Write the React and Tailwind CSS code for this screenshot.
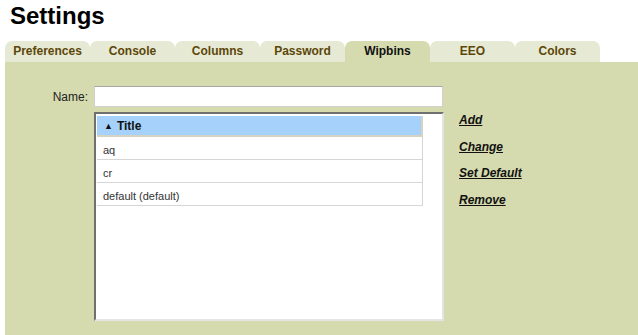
import React from "react";

const tabs = ["Preferences", "Console", "Columns", "Password", "Wipbins", "EEO", "Colors"];
const rows = ["aq", "cr", "default (default)"];
const links = ["Add", "Change", "Set Default", "Remove"];

export default function App() {
  return (
    <div className="w-[638px] h-[335px] overflow-hidden bg-white flex flex-col font-['Liberation_Sans',Arial,sans-serif]">
      <h1 className="pl-[10px] pt-[2px] text-[24px] leading-[28px] font-bold text-black">Settings</h1>
      <div className="mt-[11px] pl-[5px] flex">
        {tabs.map((t) => {
          const active = t === "Wipbins";
          return (
            <div
              key={t}
              className={
                active
                  ? "w-[85px] h-[21px] rounded-t-[7px] bg-[#d5dbae] text-[#111] text-[12px] leading-[21px] font-bold text-center"
                  : "w-[85px] h-[21px] rounded-t-[7px] bg-[#e6e9d4] text-[#5c4709] text-[12px] leading-[21px] font-bold text-center"
              }
            >
              {t}
            </div>
          );
        })}
      </div>
      <div className="ml-[5px] flex-1 bg-[#d5dbae] pt-[24px]">
        <div className="flex items-center gap-[6px]">
          <div className="w-[83px] text-right text-[12px] text-[#222]">Name:</div>
          <div className="w-[349px] h-[21px] bg-white border border-[#d0d0d0] border-t-[#a8a8a8]"></div>
        </div>
        <div className="mt-[5px] ml-[89px] flex gap-[15px]">
          <div className="w-[350px] h-[209px] bg-white border-2 border-[#e4e4e4] border-t-[#707070] border-l-[#707070] pt-[2px] pl-[1px]">
            <div className="w-[326px]">
              <div className="h-[21px] bg-[#a5d1fb] border-b-2 border-r-2 border-[#d7d3c4] flex items-center pl-[7px] pt-[1px] gap-[4px] text-[12px] font-bold text-[#111]">
                <span className="text-[9px] leading-none">▲</span>
                <span>Title</span>
              </div>
              {rows.map((r) => (
                <div
                  key={r}
                  className="h-[23px] border-b border-r border-[#d6d6d6] flex items-center pl-[6px] pt-[4px] text-[11px] text-[#333]"
                >
                  {r}
                </div>
              ))}
            </div>
          </div>
          <div className="flex flex-col gap-[10.6px]">
            {links.map((l) => (
              <a
                key={l}
                className="text-[12px] leading-[16px] font-bold italic underline text-[#111] cursor-pointer"
              >
                {l}
              </a>
            ))}
          </div>
        </div>
      </div>
    </div>
  );
}
